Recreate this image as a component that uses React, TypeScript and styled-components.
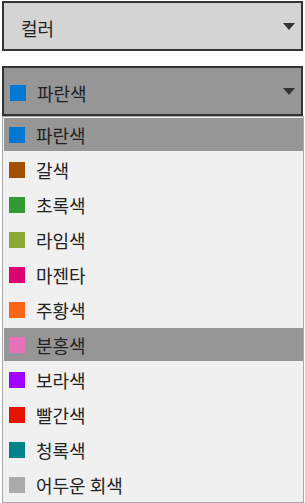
import * as React from 'react'
import styled, { createGlobalStyle } from 'styled-components'

interface ColorOption {
    name: string,
    swatch: string
}

const colors: ColorOption[] = [
    { name: '파란색', swatch: '#0078d4' },
    { name: '갈색', swatch: '#a05000' },
    { name: '초록색', swatch: '#339933' },
    { name: '라임색', swatch: '#8ca832' },
    { name: '마젠타', swatch: '#dc0073' },
    { name: '주황색', swatch: '#fa6414' },
    { name: '분홍색', swatch: '#e671b8' },
    { name: '보라색', swatch: '#a200ff' },
    { name: '빨간색', swatch: '#e51400' },
    { name: '청록색', swatch: '#00838a' },
    { name: '어두운 회색', swatch: '#aaaaaa' },
]

const GlobalStyle = createGlobalStyle`
    html, body {
        margin: 0;
        padding: 0;
        background: #ffffff;
    }
    body {
        font-family: "Noto Sans CJK KR", "Noto Sans", sans-serif;
        color: #222222;
    }
`

const Page = styled.div`
    display: flex;
    flex-direction: column;
    padding: 1px 2px 0 2px;
    width: 305px;
    box-sizing: border-box;
`

const ComboBox = styled.div<{ $open?: boolean }>`
    display: flex;
    align-items: center;
    box-sizing: border-box;
    height: 50px;
    width: 301px;
    padding: 3px 0 0 ${p => (p.$open ? '6px' : '17px')};
    border: 2px solid #333333;
    background: ${p => (p.$open ? '#969696' : '#d4d4d4')};
    font-size: 18px;
`

const Spacer = styled.div`
    height: 15px;
`

const Label = styled.span`
    flex: 1;
    line-height: 20px;
`

const Arrow = styled.span`
    width: 0;
    height: 0;
    margin-right: 6px;
    margin-top: -2px;
    border-left: 6px solid transparent;
    border-right: 6px solid transparent;
    border-top: 7px solid #333333;
`

const Swatch = styled.span<{ $color: string }>`
    width: 16px;
    height: 16px;
    flex: none;
    margin-right: 11px;
    background: ${p => p.$color};
`

const List = styled.ul`
    display: flex;
    flex-direction: column;
    margin: 0;
    padding: 0;
    list-style: none;
    width: 302px;
    box-sizing: border-box;
    border: 1px solid #a8a8a8;
    background: #f0f0f0;
`

const Item = styled.li<{ $highlight?: boolean }>`
    display: flex;
    align-items: center;
    height: 33px;
    margin: 1px 0 1px 1px;
    padding-left: 5px;
    font-size: 18px;
    background: ${p => (p.$highlight ? '#969696' : 'transparent')};
`

const App: React.FunctionComponent = (): React.ReactElement => {
    const selected = 0
    const hovered = 6

    return (
        <>
            <GlobalStyle />
            <Page>
                <ComboBox>
                    <Label>컬러</Label>
                    <Arrow />
                </ComboBox>
                <Spacer />
                <ComboBox $open>
                    <Swatch $color={colors[selected].swatch} />
                    <Label>{colors[selected].name}</Label>
                    <Arrow />
                </ComboBox>
                <List>
                    {colors.map((c: ColorOption, i: number) => (
                        <Item key={c.name} $highlight={i === selected || i === hovered}>
                            <Swatch $color={c.swatch} />
                            {c.name}
                        </Item>
                    ))}
                </List>
            </Page>
        </>
    )
}

export default App
